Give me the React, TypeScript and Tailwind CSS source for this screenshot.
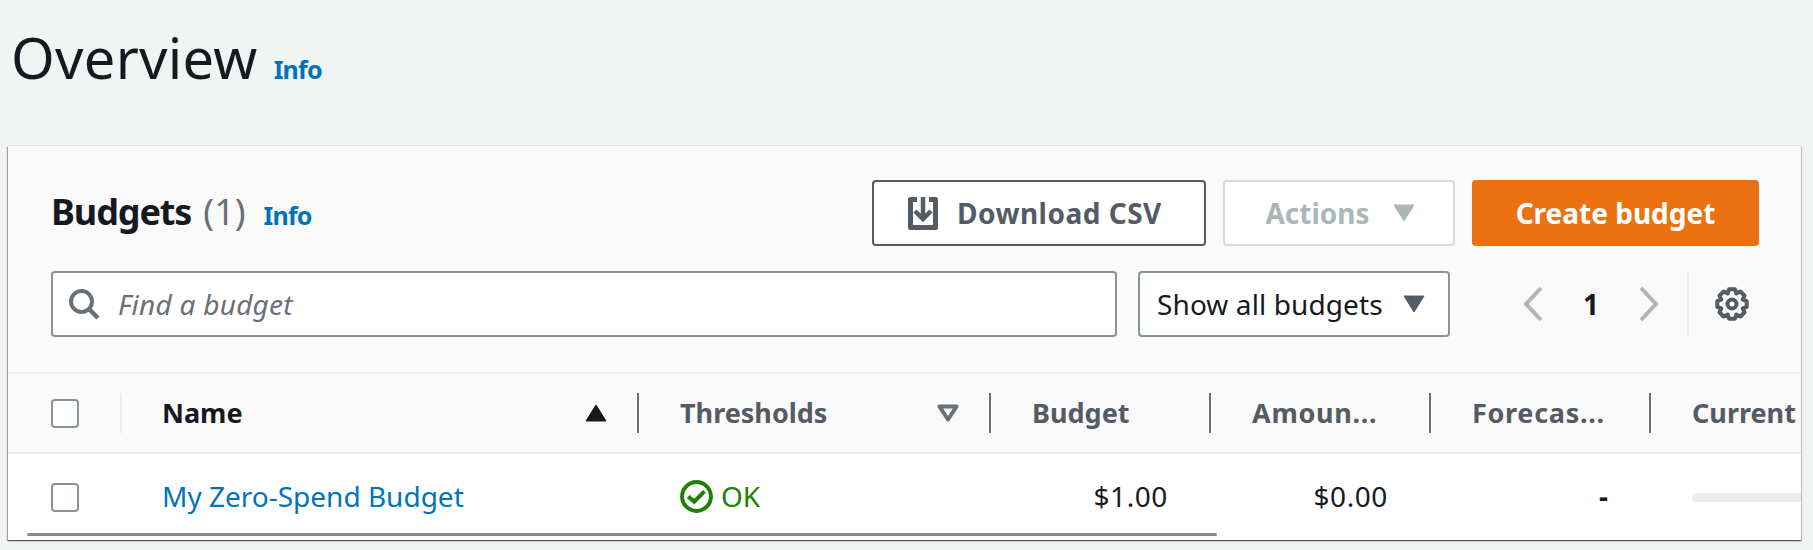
const font = "font-['Noto_Sans',sans-serif]";

// 8 tooth cog outline, centred on 17,17
function gearPath() {
  const pts: string[] = [];
  for (let i = 0; i < 8; i++) {
    const a = (i * Math.PI) / 4;
    [
      [-0.39, 11.5],
      [-0.2, 15],
      [0.2, 15],
      [0.39, 11.5],
    ].forEach(([d, r]) => {
      pts.push(`${(17 + r * Math.sin(a + d)).toFixed(2)} ${(17 - r * Math.cos(a + d)).toFixed(2)}`);
    });
  }
  return `M${pts.join("L")}Z`;
}

function Checkbox() {
  return <div className="h-[29px] w-[28px] shrink-0 rounded-[4px] border-2 border-[#879596] bg-white" />;
}

function HeaderCell({ label, width, sort, wide }: { label: string; width: string; sort?: boolean; wide?: boolean }) {
  return (
    <div className={`${width} flex h-[40px] shrink-0 items-center justify-between border-r-2 border-[#687078] pl-[41px] pr-[30px]`}>
      <span className={`mb-[2px] text-[27px] font-bold leading-none text-[#545b64] ${wide ? "tracking-[0.7px]" : ""}`}>{label}</span>
      {sort && (
        <svg width="22" height="18" viewBox="0 0 22 18">
          <path d="M2.5 2.5h17L11 15.5z" fill="none" stroke="#687078" strokeWidth="4" strokeLinejoin="round" />
        </svg>
      )}
    </div>
  );
}

export default function App() {
  return (
    <div className={`${font} h-[550px] w-[1813px] overflow-hidden bg-[#f2f3f3] px-2 text-[#16191f]`}>
      <div className="flex h-[146px] items-baseline gap-[16px] pl-[3px] pt-[17px]">
        <h1 className="text-[56px] font-normal leading-[80px] tracking-[0.3px]">Overview</h1>
        <a className="text-[25px] font-bold tracking-[-0.8px] text-[#0073bb]">Info</a>
      </div>

      <div className="h-[394px] w-[1793px] overflow-hidden bg-white shadow-[0_-1px_1px_0_rgba(0,28,36,0.06),0_1px_1px_0_rgba(0,28,36,0.5),1px_1px_1px_0_rgba(0,28,36,0.15),-1px_1px_1px_0_rgba(0,28,36,0.3)]">
        <div className="h-[228px] border-b-2 border-[#eaeded] bg-[#fafafa] pl-[43px] pr-[42px] pt-[34px]">
          <div className="flex items-center justify-between">
            <div className="mb-[2px] flex items-baseline">
              <h2 className="text-[36px] font-bold leading-[48px] tracking-[-1.1px]">Budgets</h2>
              <span className="ml-[12px] text-[36px] leading-[48px] text-[#687078]">(1)</span>
              <a className="ml-[18px] text-[25px] font-bold tracking-[-0.8px] text-[#0073bb]">Info</a>
            </div>
            <div className="flex gap-[17px]">
              <button className="flex h-[66px] w-[334px] items-center justify-start gap-[19px] rounded-[4px] border-2 border-[#545b64] bg-white pl-[34px] text-[28px] font-bold tracking-[0.5px] text-[#545b64]">
                <svg width="30" height="33" viewBox="0 0 30 33" fill="none">
                  <path d="M9 2.5H2.5v28h25v-28H21" stroke="#545b64" strokeWidth="5" strokeLinejoin="round" />
                  <path d="M15 0v22M7 14l8 8 8-8" stroke="#545b64" strokeWidth="4.5" />
                </svg>
                Download CSV
              </button>
              <button className="flex h-[66px] w-[232px] items-center justify-center gap-[23px] rounded-[4px] border-2 border-[#d5dbdb] bg-white pl-[2px] text-[28px] font-bold text-[#aab7b8]">
                Actions
                <svg width="22" height="18" viewBox="0 0 22 18"><path d="M1 1h20L11 17z" fill="#aab7b8" stroke="#aab7b8" strokeLinejoin="round" /></svg>
              </button>
              <button className="flex h-[66px] w-[287px] items-center justify-center rounded-[4px] bg-[#ec7211] text-[28px] font-bold text-white">
                Create budget
              </button>
            </div>
          </div>

          <div className="mt-[25px] flex items-stretch">
            <div className="flex h-[66px] w-[1066px] items-center rounded-[4px] border-2 border-[#879596] bg-white pl-[15px]">
              <svg width="32" height="32" viewBox="0 0 32 32" fill="none">
                <circle cx="13.5" cy="13.5" r="10.5" stroke="#687078" strokeWidth="4" />
                <path d="M21 21l9 9" stroke="#687078" strokeWidth="4.5" />
              </svg>
              <span className="ml-[18px] text-[28px] italic tracking-[0.25px] text-[#687078]">Find a budget</span>
            </div>
            <div className="ml-[21px] flex h-[66px] w-[312px] items-center justify-between rounded-[4px] border-2 border-[#879596] bg-white pl-[17px] pr-[23px] text-[28px] tracking-[0.1px]">
              Show all budgets
              <svg width="22" height="18" viewBox="0 0 22 18"><path d="M1 1h20L11 17z" fill="#545b64" stroke="#545b64" strokeLinejoin="round" /></svg>
            </div>
            <div className="flex flex-1 items-center pl-[72px]">
              <svg width="22" height="36" viewBox="0 0 22 36" fill="none"><path d="M19 2L4 18l15 16" stroke="#aab7b8" strokeWidth="4" /></svg>
              <span className="ml-[39px] w-[14px] text-[28px] font-bold">1</span>
              <svg className="ml-[41px]" width="22" height="36" viewBox="0 0 22 36" fill="none"><path d="M3 2l15 16L3 34" stroke="#aab7b8" strokeWidth="4" /></svg>
              <div className="ml-[27px] h-[66px] w-[2px] bg-[#eaeded]" />
              <svg className="ml-[26px]" width="34" height="34" viewBox="0 0 34 34" fill="none">
                <path d={gearPath()} stroke="#545b64" strokeWidth="4" strokeLinejoin="round" />
                <circle cx="17" cy="17" r="4.5" stroke="#545b64" strokeWidth="4" />
              </svg>
            </div>
          </div>
        </div>

        <div className="flex h-[80px] items-center border-b-2 border-[#eaeded] bg-[#fafafa] pl-[43px]">
          <Checkbox />
          <div className="ml-[41px] h-[40px] w-[2px] bg-[#eaeded]" />
          <div className="flex h-[40px] w-[517px] shrink-0 items-center justify-between border-r-2 border-[#687078] pl-[40px] pr-[30px]">
            <span className="mb-[2px] text-[27px] font-bold leading-none text-[#16191f]">Name</span>
            <svg width="22" height="18" viewBox="0 0 22 18"><path d="M11 1l10 16H1z" fill="#16191f" stroke="#16191f" strokeLinejoin="round" /></svg>
          </div>
          <HeaderCell label="Thresholds" width="w-[352px]" sort />
          <HeaderCell label="Budget" width="w-[220px]" />
          <HeaderCell label="Amoun..." width="w-[220px]" wide />
          <HeaderCell label="Forecas..." width="w-[220px]" wide />
          <span className="mb-[2px] ml-[41px] text-[27px] font-bold leading-none text-[#545b64]">Current</span>
        </div>

        <div className="relative flex h-[86px] items-center pl-[43px] text-[28px]">
          <Checkbox />
          <a className="mb-[2px] ml-[83px] w-[518px] shrink-0 text-[#0073bb]">My Zero-Spend Budget</a>
          <div className="mb-[2px] flex w-[309px] shrink-0 items-center gap-[8px] text-[#1d8102]">
            <svg width="33" height="33" viewBox="0 0 32 32" fill="none">
              <circle cx="16" cy="16" r="14" stroke="#1d8102" strokeWidth="3.8" />
              <path d="M8 16l5.7 5 10-10" stroke="#1d8102" strokeWidth="4" />
            </svg>
            OK
          </div>
          <div className="mb-[2px] w-[220px] shrink-0 pr-[41px] text-right tracking-[0.6px]">$1.00</div>
          <div className="mb-[2px] w-[220px] shrink-0 pr-[41px] text-right tracking-[0.6px]">$0.00</div>
          <div className="mb-[2px] w-[220px] shrink-0 pr-[41px] text-right font-bold">-</div>
          <div className="ml-[43px] h-[9px] flex-1 rounded-l-[4px] bg-[#eaeded]" />
          <div className="absolute bottom-[4px] left-[19px] h-[3px] w-[1190px] rounded-full bg-[#888888]" />
        </div>
      </div>
    </div>
  );
}
